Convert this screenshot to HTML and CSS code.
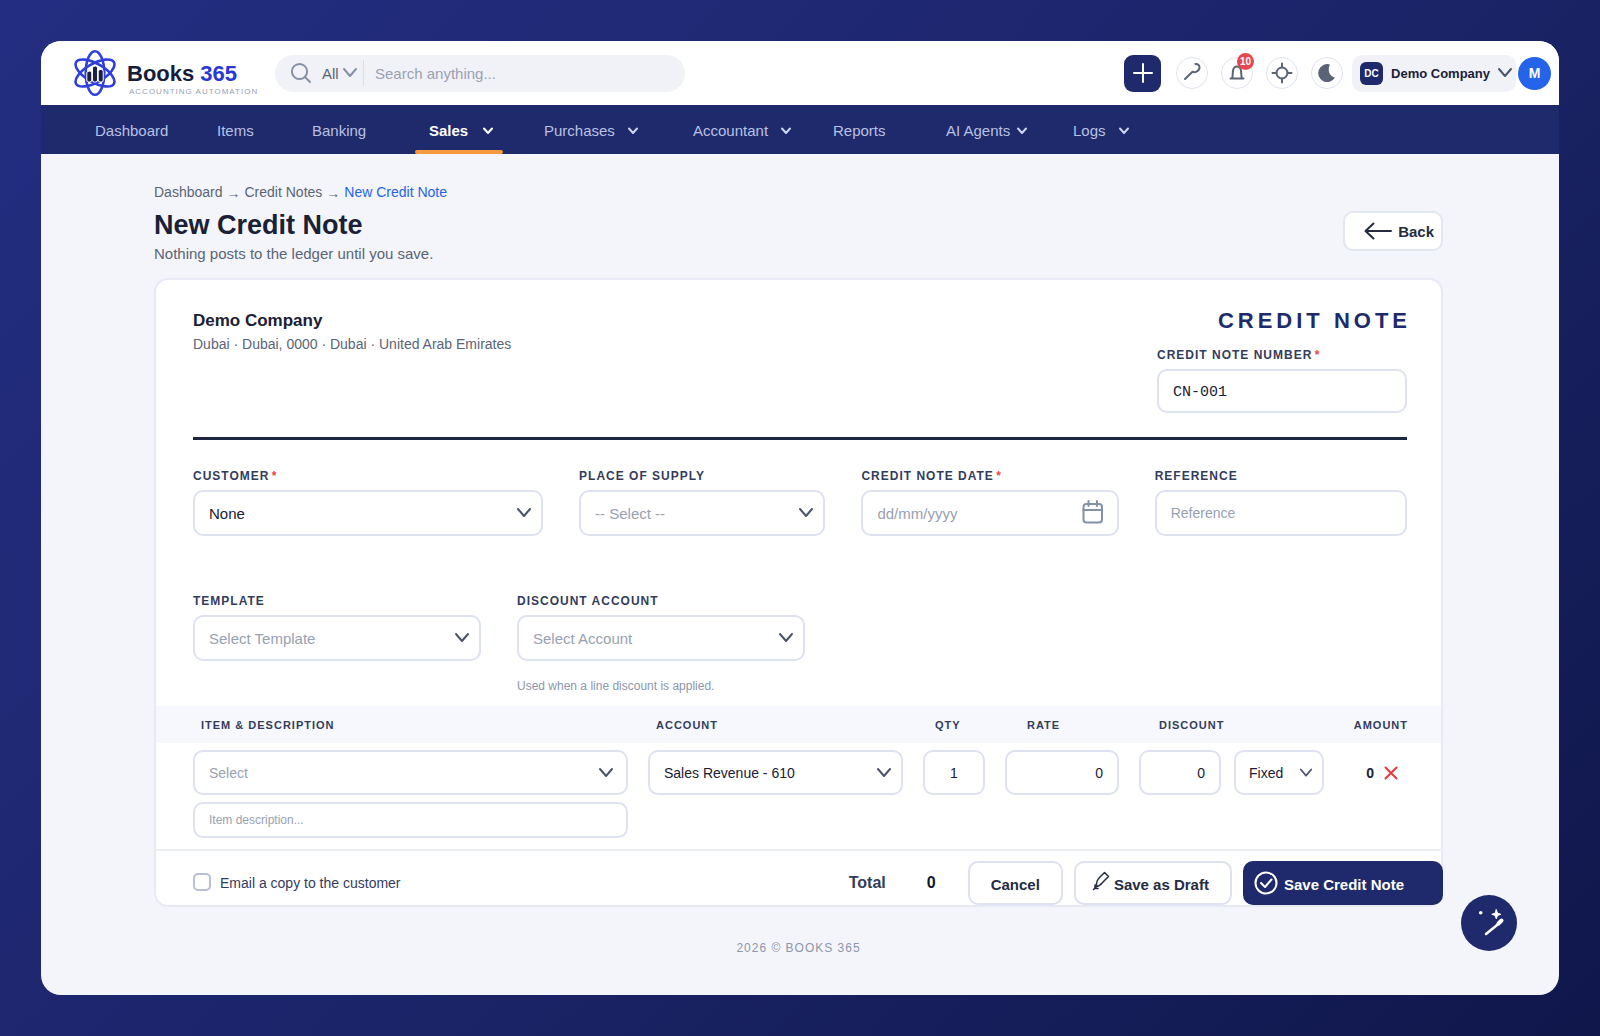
FILE: index.html
```html
<!DOCTYPE html>
<html lang="en">
<head>
<meta charset="utf-8">
<meta name="viewport" content="width=device-width, initial-scale=1">
<title>New Credit Note - Books 365</title>
<link rel="stylesheet" href="styles.css">
</head>
<body>
<svg class="sprite" aria-hidden="true">
  <symbol id="chevron" viewBox="0 0 16 12"><path d="M2 2l6 7 6-7"/></symbol>
  <symbol id="chevron-small" viewBox="0 0 12 10"><path d="M2 2.500l4 4.500 4-4.500"/></symbol>
</svg>
<div class="app">
  <header class="topbar">
    <a class="brand" href="#">
      <svg class="brand-mark" viewBox="0 0 42 48" aria-hidden="true">
        <g fill="none" stroke="#2f3fdc" stroke-width="2.600">
          <ellipse cx="21" cy="24" rx="9.300" ry="21.800"/>
          <ellipse cx="21" cy="24" rx="9.300" ry="21.800" transform="rotate(60 21 24)"/>
          <ellipse cx="21" cy="24" rx="9.300" ry="21.800" transform="rotate(120 21 24)"/>
        </g>
        <g stroke="#fff" stroke-width="1" fill="#1a2142">
          <rect x="12.800" y="22" width="5" height="11" rx="2"/>
          <rect x="18.500" y="17" width="5" height="16" rx="2"/>
          <rect x="24.200" y="20.500" width="5" height="12.500" rx="2"/>
        </g>
      </svg>
      <span class="brand-text">
        <span class="brand-name">Books <b>365</b></span>
        <span class="brand-tag">ACCOUNTING AUTOMATION</span>
      </span>
    </a>
    <form class="search" role="search">
      <svg class="search-icon" viewBox="0 0 22 22" aria-hidden="true"><circle cx="9.500" cy="9.500" r="7.600"/><path d="M15 15l5 5"/></svg>
      <span class="scope">
        <select aria-label="Search scope"><option>All</option></select>
        <svg class="chev" aria-hidden="true"><use href="#chevron"/></svg>
      </span>
      <input type="search" placeholder="Search anything..." aria-label="Search anything">
    </form>
    <div class="actions">
      <button class="add" type="button" aria-label="Add"><svg viewBox="0 0 20 20"><path d="M10 1v18M1 10h18"/></svg></button>
      <div class="round-group">
        <button class="round" type="button" aria-label="Tools"><svg viewBox="0 0 32 32"><path d="M9 22l7.500-7.300c2 1.300 6.500-.400 7-3.700.300-2.500-1.500-4.300-4-4"/></svg></button>
        <button class="round" type="button" aria-label="Notifications, 10 new"><svg viewBox="0 0 32 32"><path d="M9.500 21.500h13M11 21.500c1-2 .500-5 1-8 .500-2.500 2-4 4-4s3.500 1.500 4 4c.500 3 0 6 1 8"/></svg><span class="badge">10</span></button>
        <button class="round" type="button" aria-label="Focus"><svg viewBox="0 0 32 32"><circle cx="16" cy="16" r="5.500"/><path d="M16 6.500v4M16 21.500v4M6.500 16h4M21.500 16h4"/></svg></button>
        <button class="round" type="button" aria-label="Dark mode"><svg viewBox="0 0 32 32"><path class="solid" d="M19 7.500a9 9 0 1 0 5 13c-5.500-1-8-7.500-5-13z"/></svg></button>
      </div>
      <button class="company" type="button"><span class="company-badge">DC</span><span>Demo Company</span><svg class="chev" aria-hidden="true"><use href="#chevron"/></svg></button>
      <button class="avatar" type="button" aria-label="Account">M</button>
    </div>
  </header>

  <nav class="menu" aria-label="Main">
    <a href="#">Dashboard</a>
    <a href="#">Items</a>
    <a href="#">Banking</a>
    <a href="#" class="active" aria-current="page">Sales <svg aria-hidden="true"><use href="#chevron-small"/></svg></a>
    <a href="#">Purchases <svg aria-hidden="true"><use href="#chevron-small"/></svg></a>
    <a href="#">Accountant <svg aria-hidden="true"><use href="#chevron-small"/></svg></a>
    <a href="#">Reports</a>
    <a href="#" class="tight">AI Agents <svg aria-hidden="true"><use href="#chevron-small"/></svg></a>
    <a href="#">Logs <svg aria-hidden="true"><use href="#chevron-small"/></svg></a>
  </nav>

  <main class="page">
    <div class="crumbs"><a href="#">Dashboard</a><span>→</span><a href="#">Credit Notes</a><span>→</span><a href="#" class="current">New Credit Note</a></div>
    <div class="page-head">
      <div>
        <h1>New Credit Note</h1>
        <p>Nothing posts to the ledger until you save.</p>
      </div>
      <button class="back" type="button"><svg viewBox="0 0 28 18" aria-hidden="true"><path d="M27 9H1.500M9.500 1.500L1.500 9l8 7.500"/></svg>Back</button>
    </div>

    <form class="card">
      <div class="card-body">
        <div class="doc-head">
          <div class="issuer">
            <h2>Demo Company</h2>
            <p>Dubai · Dubai, 0000 · Dubai · United Arab Emirates</p>
          </div>
          <div class="doc-id">
            <div class="doc-title">CREDIT NOTE</div>
            <div class="field">
              <label for="number">CREDIT NOTE NUMBER <i>*</i></label>
              <input id="number" class="control mono" type="text" value="CN-001">
            </div>
          </div>
        </div>
        <div class="row row-main">
          <div class="field">
            <label for="customer">CUSTOMER <i>*</i></label>
            <div class="pick"><select id="customer" class="control"><option>None</option></select><svg class="chev" aria-hidden="true"><use href="#chevron"/></svg></div>
          </div>
          <div class="field">
            <label for="place">PLACE OF SUPPLY</label>
            <div class="pick"><select id="place" class="control empty"><option>-- Select --</option></select><svg class="chev" aria-hidden="true"><use href="#chevron"/></svg></div>
          </div>
          <div class="field">
            <label for="date">CREDIT NOTE DATE <i>*</i></label>
            <div class="pick"><input id="date" class="control" type="text" placeholder="dd/mm/yyyy"><svg class="calendar" viewBox="0 0 22 24" aria-hidden="true"><rect x="1.500" y="4" width="18.500" height="18.500" rx="3"/><path d="M1.500 10h18.500M6.500 1v5M15 1v5"/></svg></div>
          </div>
          <div class="field">
            <label for="reference">REFERENCE</label>
            <input id="reference" class="control small" type="text" placeholder="Reference">
          </div>
        </div>
        <div class="row row-extra">
          <div class="field">
            <label for="template">TEMPLATE</label>
            <div class="pick"><select id="template" class="control empty"><option>Select Template</option></select><svg class="chev" aria-hidden="true"><use href="#chevron"/></svg></div>
          </div>
          <div class="field">
            <label for="discount-account">DISCOUNT ACCOUNT</label>
            <div class="pick"><select id="discount-account" class="control empty"><option>Select Account</option></select><svg class="chev" aria-hidden="true"><use href="#chevron"/></svg></div>
            <p class="hint">Used when a line discount is applied.</p>
          </div>
        </div>
      </div>

      <table class="lines">
        <colgroup><col><col class="col-account"><col class="col-qty"><col class="col-rate"><col class="col-discount"><col class="col-amount"></colgroup>
        <thead>
          <tr><th>ITEM &amp; DESCRIPTION</th><th>ACCOUNT</th><th>QTY</th><th>RATE</th><th>DISCOUNT</th><th>AMOUNT</th></tr>
        </thead>
        <tbody>
          <tr>
            <td>
              <div class="pick item"><select class="control empty" aria-label="Item"><option>Select</option></select><svg class="chev" aria-hidden="true"><use href="#chevron"/></svg></div>
              <input class="control desc" type="text" placeholder="Item description..." aria-label="Item description">
            </td>
            <td><div class="pick"><select class="control" aria-label="Account"><option>Sales Revenue - 610</option></select><svg class="chev" aria-hidden="true"><use href="#chevron"/></svg></div></td>
            <td><input class="control center" type="text" value="1" aria-label="Quantity"></td>
            <td><input class="control number" type="text" value="0" aria-label="Rate"></td>
            <td><div class="discount"><input class="control number" type="text" value="0" aria-label="Discount"><div class="pick kind"><select class="control" aria-label="Discount type"><option>Fixed</option></select><svg class="chev" aria-hidden="true"><use href="#chevron"/></svg></div></div></td>
            <td><div class="amount"><strong>0</strong><button type="button" aria-label="Remove line"><svg viewBox="0 0 14 14"><path d="M1.500 1.500l11 11M12.500 1.500l-11 11"/></svg></button></div></td>
          </tr>
        </tbody>
      </table>

      <div class="card-foot">
        <label class="check"><input type="checkbox">Email a copy to the customer</label>
        <div class="total"><span>Total</span><strong>0</strong></div>
        <div class="buttons">
          <button class="btn" type="button">Cancel</button>
          <button class="btn draft" type="button"><svg viewBox="0 0 18 20" aria-hidden="true"><path d="M1.500 18.500l3-3M4.500 15.500c-.500-4 1-7 3.500-9.500l4.500-4.500 4 4-4.500 4.500c-2.500 2.500-4 5.500-7.500 5.500zM3 14v3.500h3"/></svg>Save as Draft</button>
          <button class="btn primary" type="submit"><svg viewBox="0 0 24 24" aria-hidden="true"><circle cx="12" cy="12" r="10.500"/><path d="M7 12l4 4 6.500-7.500"/></svg>Save Credit Note</button>
        </div>
      </div>
    </form>
    <footer class="copyright">2026 © BOOKS 365</footer>
  </main>

  <button class="assistant" type="button" aria-label="Assistant">
    <svg viewBox="0 0 56 56"><path class="wand" d="M25 39L38 28.500"/><path class="tip" d="M37.500 28.500l3-3"/><path class="spark" d="M35.300 14.800l1.200 3.300 3.300 1.200-3.300 1.200-1.200 3.300-1.200-3.300-3.300-1.200 3.300-1.200z"/><circle class="dot" cx="19.700" cy="17.800" r="1.800"/></svg>
  </button>
</div>
</body>
</html>
```
FILE: styles.css
```css
* { box-sizing: border-box; }

body {
  margin: 0;
  min-height: 100vh;
  padding: 41px;
  display: flex;
  font-family: "Liberation Sans", Arial, sans-serif;
  font-size: 15px;
  color: #1a2035;
  background: linear-gradient(135deg, #232e82 0%, #1c256a 50%, #10174b 100%);
}

h1, h2, p { margin: 0; }
a { color: inherit; text-decoration: none; }
button, input, select { font: inherit; color: inherit; }
button { cursor: pointer; padding: 0; border: 0; background: none; }
svg { display: block; flex: none; fill: none; stroke: currentColor; stroke-width: 2; stroke-linecap: round; stroke-linejoin: round; }
.sprite { position: absolute; width: 0; height: 0; }
.chev { width: 16px; height: 12px; color: #4b5568; }

.app {
  position: relative;
  flex: 1;
  min-width: 0;
  border-radius: 20px;
  overflow: hidden;
  background: #f4f5fb;
}

/* Top bar */
.topbar {
  display: flex;
  align-items: center;
  height: 64px;
  padding: 0 8px 0 33px;
  background: #fff;
}
.brand { display: flex; align-items: center; gap: 11px; width: 201px; }
.brand-mark { width: 42px; height: 48px; }
.brand-text { display: flex; flex-direction: column; padding-top: 14px; white-space: nowrap; }
.brand-name { font-size: 22px; line-height: 24px; font-weight: 700; color: #161d3a; }
.brand-name b { color: #2638d6; }
.brand-tag { padding-left: 2px; font-size: 8px; line-height: 12px; letter-spacing: 1px; color: #98a1b5; }

.search {
  display: flex;
  align-items: center;
  width: 410px;
  height: 37px;
  padding-left: 15px;
  border-radius: 19px;
  background: #f1f2f8;
}
.search-icon { width: 22px; height: 22px; color: #8490a6; }
.scope { display: flex; align-items: center; height: 26px; margin-left: 10px; padding-right: 5px; border-right: 1px solid #d9deea; color: #5a6476; }
.scope select { width: 20px; padding: 0; border: 0; appearance: none; background: none; }
.scope .chev { color: #8490a6; }
.search input { flex: 1; min-width: 0; padding: 0 0 0 11px; border: 0; outline: 0; background: none; appearance: none; }
::placeholder { color: #98a1b3; opacity: 1; }

.actions { display: flex; align-items: center; margin-left: auto; }
.add { display: grid; place-items: center; width: 37px; height: 37px; margin-right: 15px; border-radius: 9px; color: #fff; background: #1e2a6b; }
.add svg { width: 20px; height: 20px; }
.round-group { display: flex; gap: 13px; margin-right: 9px; }
.round { position: relative; width: 32px; height: 32px; border: 1px solid #dfe3f0; border-radius: 50%; color: #5a6476; background: #fff; }
.round svg { width: 32px; height: 32px; margin: -1px; }
.round .solid { fill: currentColor; stroke: none; }
.badge { position: absolute; top: -5px; right: -2px; width: 17px; height: 17px; border-radius: 50%; font-size: 10px; line-height: 18px; font-weight: 700; color: #fff; background: #e5484d; }
.company { display: flex; align-items: center; height: 37px; padding: 0 3px 0 8px; margin-right: 2px; border-radius: 10px; font-size: 13px; font-weight: 700; background: #f1f2f8; }
.company-badge { width: 23px; height: 23px; margin-right: 8px; border-radius: 6px; font-size: 10px; line-height: 23px; color: #fff; background: #1e2a6b; }
.company .chev { margin-left: 7px; }
.avatar { width: 33px; height: 33px; border-radius: 50%; font-size: 14px; font-weight: 700; color: #fff; background: #2563eb; }

/* Main menu */
.menu {
  display: grid;
  grid-template-columns: 122px 95px 117px 115px 149px 140px 113px 127px auto;
  justify-content: start;
  justify-items: start;
  height: 49px;
  padding-left: 40px;
  color: #b9c1e3;
  background: #1e2a6b;
}
.menu a { display: flex; align-items: center; gap: 12px; padding: 5px 9px 0 14px; border-bottom: 4px solid transparent; white-space: nowrap; }
.menu .tight { gap: 6px; }
.menu svg { width: 12px; height: 10px; margin-top: 2px; color: #cdd4f0; }
.menu .active { position: relative; gap: 14px; font-weight: 700; color: #fff; }
.menu .active svg { color: #fff; }
.menu .active::after { content: ""; position: absolute; left: 0; right: 0; bottom: -4px; height: 4px; border-radius: 2px; background: #f79a3e; }

/* Page */
.page { padding: 28px 116px 0 113px; }
.crumbs { display: flex; gap: 4px; font-size: 14px; line-height: 20px; color: #5a6476; }
.crumbs span { line-height: 22px; }
.crumbs .current { color: #2563eb; }
.page-head { display: flex; justify-content: space-between; align-items: flex-start; margin: 4px 0 14px; }
.page-head h1 { font-size: 27px; line-height: 34px; }
.page-head p { margin-top: 2px; line-height: 20px; color: #5a6476; }
.back { display: flex; align-items: center; gap: 6px; height: 40px; margin-top: 3px; padding: 0 7px 0 19px; border: 2px solid #e2e6f1; border-radius: 10px; font-weight: 700; color: #242c42; background: #fff; }
.back svg { width: 28px; height: 18px; }

.card { border: 2px solid #e7eaf4; border-radius: 14px; background: #fff; }
.card-body { padding: 28px 34px 12px 37px; }

.doc-head { display: flex; justify-content: space-between; padding-bottom: 24px; border-bottom: 3px solid #1f2640; }
.issuer { padding-top: 2px; }
.issuer h2 { font-size: 17px; line-height: 22px; }
.issuer p { margin-top: 2px; font-size: 14px; line-height: 20px; color: #5a6476; }
.doc-id { width: 250px; }
.doc-title { margin: 0 -4px 13px 0; text-align: right; font-size: 22px; line-height: 26px; font-weight: 700; letter-spacing: 4px; white-space: nowrap; color: #1e2a6b; }

.row { display: grid; gap: 36px; }
.row-main { grid-template-columns: 351fr 247fr 258fr 253fr; margin-top: 28px; }
.row-extra { grid-template-columns: 288px 288px; margin-top: 57px; }
.field { display: flex; flex-direction: column; gap: 6px; min-width: 0; }
.field label { font-size: 12px; line-height: 16px; font-weight: 700; letter-spacing: 1px; white-space: nowrap; color: #333c5c; }
.field label i { margin-left: -2px; font-style: normal; color: #ef4444; }
.hint { margin-top: 11px; font-size: 12px; line-height: 16px; color: #8d96ab; }

.control { display: block; width: 100%; height: 46px; padding: 0 14px; border: 2px solid #dde1f0; border-radius: 10px; outline: 0; appearance: none; background: #fff; }
.control.empty { color: #98a1b3; }
.control.small { font-size: 14px; }
.mono { height: 44px; padding-top: 3px; font-family: "Liberation Mono", monospace; }
.pick { display: grid; align-items: center; }
.pick > * { grid-area: 1 / 1; }
.pick > svg { justify-self: end; margin-right: 11px; pointer-events: none; }
.pick .calendar { width: 22px; height: 24px; margin: 0 15px 2px 0; color: #8490a6; }

/* Line items */
.lines { width: 100%; border-collapse: collapse; table-layout: fixed; font-size: 14px; }
.col-account { width: 275px; }
.col-qty { width: 82px; }
.col-rate { width: 134px; }
.col-discount { width: 205px; }
.col-amount { width: 107px; }
.lines th { height: 37px; padding: 0 0 0 18px; text-align: left; font-size: 11px; letter-spacing: 1px; color: #333c5c; background: #f7f8fd; }
.lines th:nth-child(1) { padding-left: 45px; }
.lines th:nth-child(3) { padding-left: 22px; }
.lines th:nth-child(4) { padding-left: 32px; }
.lines th:nth-child(5) { padding-left: 30px; }
.lines th:last-child { padding: 0 33px 0 0; text-align: right; }
.lines td { padding: 7px 10px 11px; vertical-align: top; }
.lines td:first-child { padding-left: 37px; }
.lines .control { height: 45px; }
.lines .desc { height: 36px; margin-top: 7px; font-size: 12px; }
.lines .center { text-align: center; }
.lines .number { text-align: right; }
.item .chev { margin-right: 14px; }
.discount { display: flex; gap: 13px; }
.discount .number { flex: 1; }
.kind { width: 90px; }
.lines .kind .control { padding: 0 13px; }
.kind .chev { width: 14px; height: 12px; }
.amount { display: flex; align-items: center; justify-content: flex-end; gap: 10px; height: 45px; padding-right: 33px; }
.amount button { color: #e5383f; }
.amount svg { width: 14px; height: 14px; }

.card-foot { display: flex; align-items: flex-start; margin-right: -2px; padding: 10px 0 0 37px; border-top: 2px solid #eceef7; line-height: 20px; }
.check { display: flex; align-items: center; gap: 9px; margin-top: 12px; font-size: 14px; color: #333c5c; }
.check input { width: 18px; height: 18px; margin: -2px 0 0; border: 2px solid #b9c0d8; border-radius: 5px; appearance: none; background: #fff; }
.total { display: flex; gap: 41px; margin: 12px 32px 0 auto; font-size: 16px; font-weight: 700; color: #333c5c; }
.total strong { color: #12182c; }
.buttons { display: flex; gap: 11px; }
.btn { display: flex; align-items: center; gap: 4px; height: 44px; padding: 3px 21px 0; border: 2px solid #dde1f0; border-radius: 10px; font-weight: 700; white-space: nowrap; color: #242c42; background: #fff; }
.draft { padding-left: 16px; }
.draft svg { width: 18px; height: 20px; margin-top: -8px; stroke-width: 1.500; }
.primary { gap: 6px; padding: 3px 37px 0 9px; border-color: #1e2a6b; color: #fff; background: #1e2a6b; }
.primary svg { width: 24px; height: 24px; margin-top: -3px; }

.copyright { margin-top: 32px; text-align: center; font-size: 12px; line-height: 18px; letter-spacing: 1px; color: #8d96ab; }

.assistant { position: absolute; right: 42px; bottom: 44px; width: 56px; height: 56px; border-radius: 50%; color: #fff; background: #1e2a6b; }
.assistant svg { width: 56px; height: 56px; }
.assistant .wand { stroke-width: 2.500; }
.assistant .tip { stroke-width: 4; }
.assistant .spark { fill: currentColor; stroke-width: 1; }
.assistant .dot { fill: currentColor; stroke: none; }
```
